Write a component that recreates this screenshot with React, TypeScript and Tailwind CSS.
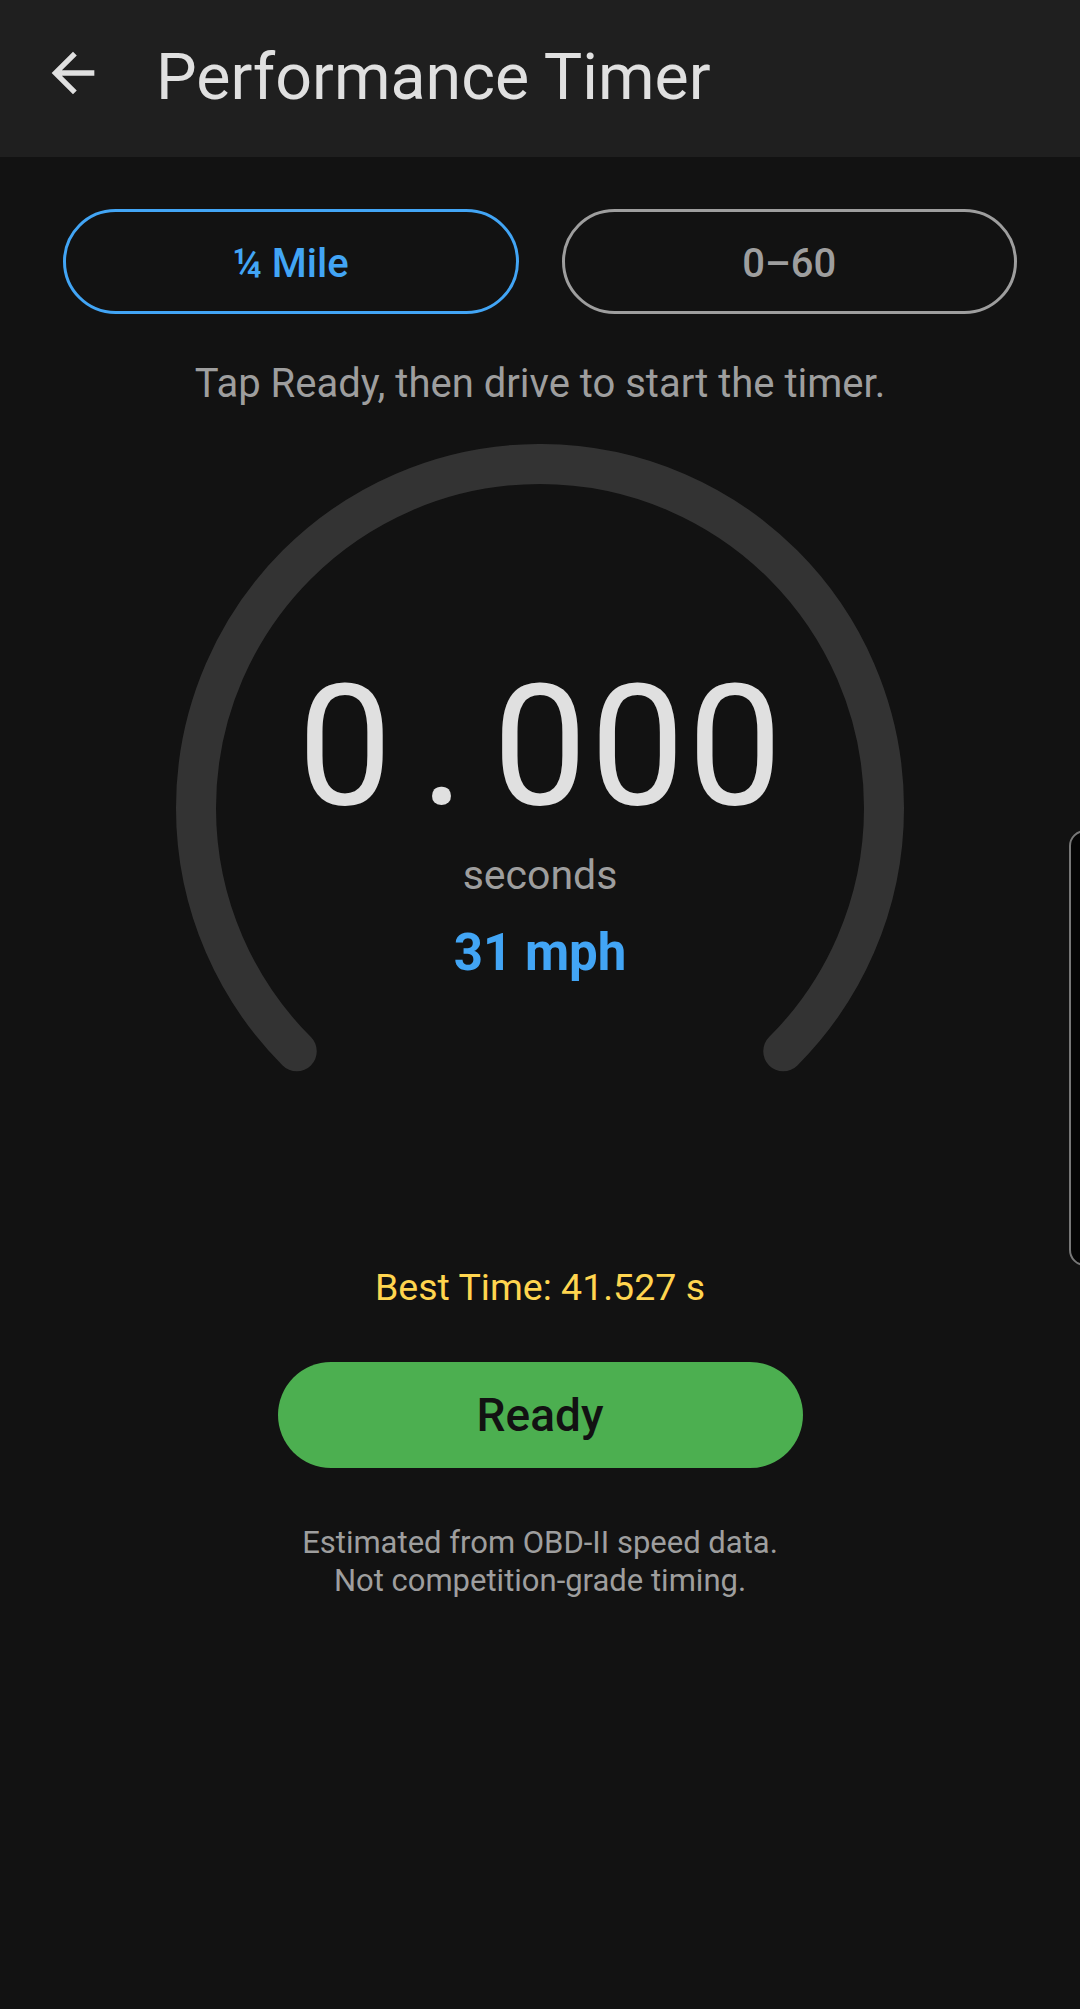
import { useState } from "react";

const FONT = "font-['Roboto','Noto_Sans',sans-serif]";

function Gauge({ seconds, mph }: { seconds: string; mph: number }) {
  // 270° track, open at the bottom
  const r = 344;
  const c = 364;
  const d = 0.7071 * r;
  const track = `M ${c - d} ${c + d} A ${r} ${r} 0 1 1 ${c + d} ${c + d}`;

  return (
    <div className="relative mx-auto mt-[37px] h-[728px] w-[728px]">
      <svg
        className="absolute inset-0"
        width={728}
        height={728}
        viewBox="0 0 728 728"
      >
        <path
          d={track}
          fill="none"
          stroke="#333333"
          strokeWidth={40}
          strokeLinecap="round"
        />
      </svg>
      <div className="relative flex flex-col items-center pt-[219px]">
        <div className="flex text-[168px] leading-[168px] font-normal text-[#e0e0e0]">
          {seconds.split("").map((ch, i) => (
            <span key={i} className="inline-block w-[97.5px] text-center">
              {ch}
            </span>
          ))}
        </div>
        <div className="mt-[19px] text-[41px] leading-[50px] text-[#9e9e9e]">
          seconds
        </div>
        <div className="mt-[22px] text-[51px] leading-[62px] font-bold text-[#42a5f5]">
          {mph} mph
        </div>
      </div>
    </div>
  );
}

export default function App() {
  const [mode, setMode] = useState<"quarter" | "sixty">("quarter");

  const tabClass = (active: boolean) =>
    active
      ? "flex-1 h-[105px] pt-[4px] rounded-full border-[3px] border-[#42a5f5] text-[40px] font-medium text-[#42a5f5]"
      : "flex-1 h-[105px] pt-[4px] rounded-full border-[3px] border-[#9e9e9e] text-[40px] font-medium text-[#9e9e9e]";

  return (
    <div className={`relative min-h-[2009px] w-[1080px] bg-[#121212] ${FONT}`}>
      {/* Top bar */}
      <header className="flex h-[157px] items-start bg-[#1f1f1f]">
        <button className="ml-[41px] mt-[41px]" aria-label="Back">
          <svg width={64} height={64} viewBox="0 0 24 24" fill="#e0e0e0">
            <path d="M20 11H7.83l5.59-5.59L12 4l-8 8 8 8 1.41-1.41L7.83 13H20v-2z" />
          </svg>
        </button>
        <h1 className="ml-[51px] mt-[37px] text-[64.5px] leading-[80px] font-normal text-[#e0e0e0]">
          Performance Timer
        </h1>
      </header>

      {/* Mode toggle */}
      <div className="mt-[52px] flex gap-[43px] px-[63px]">
        <button className={tabClass(mode === "quarter")} onClick={() => setMode("quarter")}>
          ¼ Mile
        </button>
        <button className={tabClass(mode === "sixty")} onClick={() => setMode("sixty")}>
          0–60
        </button>
      </div>

      <p className="mt-[47px] text-center text-[40px] leading-[46px] text-[#9e9e9e]">
        Tap Ready, then drive to start the timer.
      </p>

      <Gauge seconds="0.000" mph={31} />

      <p className="mt-[92px] text-center text-[37.5px] leading-[46px] text-[#ffd54f]">
        Best Time: 41.527 s
      </p>

      <div className="mt-[52px] flex justify-center">
        <button className="h-[106px] w-[525px] rounded-full bg-[#4caf50] text-[46px] font-medium text-[#121212]">
          Ready
        </button>
      </div>

      <p className="mt-[56px] text-center text-[31px] leading-[38px] text-[#9e9e9e]">
        Estimated from OBD-II speed data.
        <br />
        Not competition-grade timing.
      </p>

      {/* Edge panel handle */}
      <div className="absolute left-[1069px] top-[830px] h-[436px] w-[30px] rounded-l-[16px] border-2 border-[#777777] bg-[#050505]" />
    </div>
  );
}
